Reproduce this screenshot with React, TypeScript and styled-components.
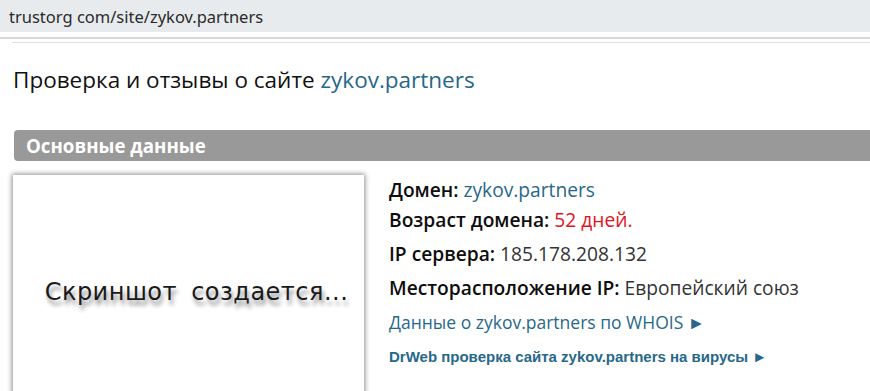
import React from "react"
import styled, { createGlobalStyle } from "styled-components"

const GlobalStyle = createGlobalStyle`
  html, body {
    margin: 0;
    padding: 0;
    background: #ffffff;
    overflow: hidden;
  }
  body {
    font-family: "Open Sans", "Noto Sans", sans-serif;
    color: #111111;
  }
`

const Page = styled.div`
  width: 870px;
  height: 391px;
  overflow: hidden;
`

const AddressBar = styled.div`
  height: 32px;
  background: #e8ebee;
  display: flex;
  align-items: center;
  padding-left: 9px;
  font-family: "Noto Sans", "Open Sans", sans-serif;
  font-size: 16.5px;
  color: #2a2a2a;
`

const TopRule = styled.div`
  margin-top: 5px;
  height: 2px;
  background: #d9d9d9;
`

const SubRule = styled.div`
  margin: 3px 0 0 12px;
  height: 1px;
  background: #e2e2e2;
`

const Content = styled.div`
  padding: 0 0 0 13px;
`

const Title = styled.h1`
  margin: 22px 0 0 0;
  font-size: 22.5px;
  font-weight: 400;
  line-height: 30px;
  color: #111111;
`

const Link = styled.a`
  color: #27688a;
  text-decoration: none;
`

const SectionBar = styled.div`
  margin: 35px 0 0 1px;
  height: 31px;
  background: #999999;
  border-radius: 4px 0 0 4px;
  display: flex;
  align-items: center;
  padding-left: 12px;
  font-size: 18.7px;
  font-weight: 700;
  color: #ffffff;
`

const Body = styled.div`
  display: flex;
  margin-top: 14px;
  gap: 25px;
`

const Shot = styled.div`
  width: 351px;
  height: 260px;
  flex-shrink: 0;
  background: #ffffff;
  box-shadow: 0 0 5px 1px rgba(0, 0, 0, 0.45);
  display: flex;
  align-items: flex-start;
  justify-content: center;
  padding: 103px 0 0 16px;
  box-sizing: border-box;
`

const ShotText = styled.span`
  font-family: "DejaVu Sans", sans-serif;
  font-size: 24px;
  letter-spacing: 0.5px;
  word-spacing: 6px;
  color: #1a1a1a;
  text-shadow: 2px 5px 4px rgba(0, 0, 0, 0.45);
`

const Info = styled.div`
  display: flex;
  flex-direction: column;
`

const Row = styled.div<{ $size: number; $h: number; $small?: boolean }>`
  height: ${(p) => p.$h}px;
  display: flex;
  align-items: center;
  font-size: ${(p) => p.$size}px;
  font-family: ${(p) =>
    p.$small ? `"Liberation Sans", Arial, sans-serif` : `"Open Sans", sans-serif`};
  font-weight: ${(p) => (p.$small ? 700 : 400)};
  white-space: pre;
  color: #333333;
`

const Label = styled.span`
  font-weight: 600;
  color: #0d0d0d;
`

const Red = styled.span`
  color: #e0141e;
`

export default function App() {
  return (
    <Page>
      <GlobalStyle />
      <AddressBar>trustorg com/site/zykov.partners</AddressBar>
      <TopRule />
      <SubRule />
      <Content>
        <Title>
          Проверка и отзывы о сайте <Link href="#">zykov.partners</Link>
        </Title>
        <SectionBar>Основные данные</SectionBar>
        <Body>
          <Shot>
            <ShotText>Скриншот создается...</ShotText>
          </Shot>
          <Info>
            <Row $size={19.2} $h={28}>
              <Label>Домен: </Label>
              <Link href="#">zykov.partners</Link>
            </Row>
            <Row $size={19.2} $h={33}>
              <Label>Возраст домена: </Label>
              <Red>52 дней.</Red>
            </Row>
            <Row $size={19.2} $h={34}>
              <Label>IP сервера: </Label>185.178.208.132
            </Row>
            <Row $size={19.2} $h={34}>
              <Label>Месторасположение IP: </Label>Европейский союз
            </Row>
            <Row $size={17.5} $h={35}>
              <Link href="#">Данные о zykov.partners по WHOIS ►</Link>
            </Row>
            <Row $size={15} $h={34} $small>
              <Link href="#">DrWeb проверка сайта zykov.partners на вирусы ►</Link>
            </Row>
          </Info>
        </Body>
      </Content>
    </Page>
  )
}
